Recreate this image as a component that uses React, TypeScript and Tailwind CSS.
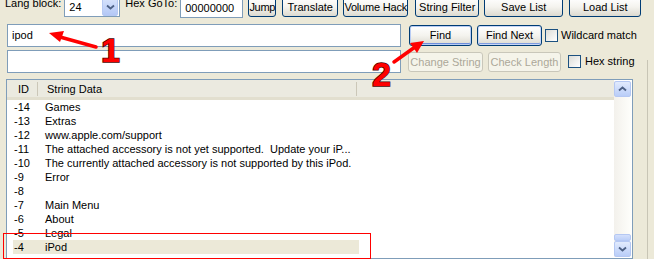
import React from 'react';

const rows: [string, string][] = [
  ['-14', 'Games'],
  ['-13', 'Extras'],
  ['-12', 'www.apple.com/support'],
  ['-11', 'The attached accessory is not yet supported.  Update your iP...'],
  ['-10', 'The currently attached accessory is not supported by this iPod.'],
  ['-9', 'Error'],
  ['-8', ''],
  ['-7', 'Main Menu'],
  ['-6', 'About'],
  ['-5', 'Legal'],
  ['-4', 'iPod'],
];

const btn =
  'shrink-0 flex items-center justify-center whitespace-nowrap rounded-[3px] border border-[#003C74] bg-linear-to-b from-white via-[#F4F3EE] to-[#DCDAD0] text-[11px] text-black leading-none';
const btnOff =
  'shrink-0 flex items-center justify-center whitespace-nowrap rounded-[3px] border border-[#C9C7BA] bg-[#F5F4EA] text-[11px] text-[#ACA899] leading-none';
const check = 'shrink-0 w-[13px] h-[13px] border border-[#1C5180] bg-linear-to-br from-[#DCDCD7] to-white';

export default function App() {
  return (
    <div className="relative w-[654px] h-[259px] overflow-hidden bg-[#ECE9D8] font-['Liberation_Sans',Arial,sans-serif] text-[11px] text-black">
      {/* top toolbar row */}
      <div className="flex items-start h-[20px] -mt-[3px]">
        <span className="ml-[5px] leading-[13px] whitespace-nowrap">Lang block:</span>
        <div className="ml-[3px] w-[56px] h-[20px] border border-[#7F9DB9] bg-white flex items-center">
          <span className="pl-[4px] flex-1 leading-none">24</span>
          <div className="w-[16px] h-[18px] mr-[1px] rounded-[2px] bg-linear-to-b from-[#D6E2FB] to-[#B4C8F6] border border-[#B6C9F2] flex items-center justify-center">
            <svg width="9" height="6" viewBox="0 0 9 6">
              <path d="M1 1.5 L4.5 4.5 L8 1.5" fill="none" stroke="#4D6185" strokeWidth="1.8" />
            </svg>
          </div>
        </div>
        <span className="ml-[5px] leading-[13px] whitespace-nowrap">Hex GoTo:</span>
        <div className="ml-[3px] mt-[1px] w-[63px] h-[20px] border border-[#7F9DB9] bg-white flex items-center pl-[4px]">00000000</div>
        <div className={`${btn} ml-[5px] w-[28px] h-[20px] tracking-[-0.3px]`}>Jump</div>
        <div className={`${btn} ml-[6px] w-[56px] h-[20px]`}>Translate</div>
        <div className={`${btn} ml-[5px] w-[65px] h-[20px] tracking-[-0.2px]`}>Volume Hack</div>
        <div className={`${btn} ml-[7px] w-[64px] h-[20px]`}>String Filter</div>
        <div className={`${btn} ml-[5px] w-[79px] h-[20px]`}>Save List</div>
        <div className={`${btn} ml-[6px] w-[72px] h-[20px]`}>Load List</div>
      </div>

      {/* search rows */}
      <div className="flex items-start mt-[7px]">
        <div className="ml-[7px] w-[394px] h-[23px] border border-[#7F9DB9] bg-white flex items-center pl-[4px]">ipod</div>
        <div className={`${btn} ml-[8px] mt-[1px] w-[63px] h-[21px] shadow-[inset_0_0_0_1px_#B8CCF4,inset_0_-2px_0_#6E8EDC]`}>Find</div>
        <div className={`${btn} ml-[5px] mt-[1px] w-[65px] h-[21px] shadow-[inset_0_0_0_1px_#C8D6F6,inset_0_-2px_0_#7F9CE0]`}>Find Next</div>
        <div className={`${check} ml-[3px] mt-[5px]`} />
        <span className="ml-[3px] mt-[5px] leading-[13px] whitespace-nowrap">Wildcard match</span>
      </div>
      <div className="flex items-start mt-[3px]">
        <div className="ml-[7px] w-[394px] h-[23px] border border-[#7F9DB9] bg-white" />
        <div className={`${btnOff} ml-[7px] mt-[2px] w-[75px] h-[20px]`}>Change String</div>
        <div className={`${btnOff} ml-[5px] mt-[2px] w-[73px] h-[20px]`}>Check Length</div>
        <div className={`${check} ml-[7px] mt-[5px]`} />
        <span className="ml-[4px] mt-[5px] leading-[13px] whitespace-nowrap">Hex string</span>
      </div>

      {/* list view */}
      <div className="ml-[6px] mt-[6px] w-[627px] h-[180px] border border-[#7F9DB9] bg-white flex">
        <div className="flex-1 flex flex-col">
          <div className="h-[20px] flex items-center bg-[#EBEAE0] border-b-[3px] border-[#E2DFCF]">
            <div className="w-[31px] pl-[11px] border-r border-[#CBC7B8] leading-[14px]">ID</div>
            <div className="w-[319px] pl-[9px] border-r border-[#CBC7B8] leading-[14px]">String Data</div>
          </div>
          <div className="flex flex-col">
            {rows.map(([id, text], i) => (
              <div
                key={id}
                className={`h-[14px] flex items-center leading-[14px] ${
                  i === rows.length - 1 ? 'ml-[6px] w-[346px] bg-[#ECE9D8]' : 'ml-[6px]'
                }`}
              >
                <span className="w-[32px] pl-[1px]">{id}</span>
                <span className="whitespace-pre">{text}</span>
              </div>
            ))}
          </div>
        </div>
        {/* scrollbar */}
        <div className="w-[17px] mt-[1px] mr-[1px] mb-[1px] flex flex-col bg-linear-to-r from-[#F3F1EC] to-[#FEFEFB]">
          <div className="h-[16px] rounded-[2px] border border-[#B5C8F3] bg-linear-to-b from-[#E2EBFD] to-[#B9CDF8] flex items-center justify-center">
            <svg width="9" height="6" viewBox="0 0 9 6">
              <path d="M1 4.5 L4.5 1.5 L8 4.5" fill="none" stroke="#4D6185" strokeWidth="1.8" />
            </svg>
          </div>
          <div className="flex-1" />
          <div className="h-[7px] rounded-[2px] border border-[#B5C8F3] bg-linear-to-b from-[#D4E0FC] to-[#BCCFF8]" />
          <div className="h-[16px] rounded-[2px] border border-[#B5C8F3] bg-linear-to-b from-[#E2EBFD] to-[#B9CDF8] flex items-center justify-center">
            <svg width="9" height="6" viewBox="0 0 9 6">
              <path d="M1 1.5 L4.5 4.5 L8 1.5" fill="none" stroke="#4D6185" strokeWidth="1.8" />
            </svg>
          </div>
        </div>
      </div>

      {/* group edge on the right */}
      <div className="absolute left-[647px] top-[60px] w-px h-[199px] bg-[#C8C5B5]" />

      {/* annotations */}
      <div className="absolute left-[3px] top-[233px] w-[368px] h-[26px] border-[1.5px] border-[#FF0000]" />
      <svg className="absolute left-0 top-0 pointer-events-none" width="654" height="259">
        <line x1="96" y1="47" x2="60" y2="37" stroke="#F00" strokeWidth="3.5" strokeLinecap="round" />
        <polygon points="49,33 64,31 60,42" fill="#F00" />
        <line x1="394" y1="62" x2="415" y2="47" stroke="#F00" strokeWidth="3.5" strokeLinecap="round" />
        <polygon points="424,41 417,53 410,43" fill="#F00" />
      </svg>
      <span className="absolute left-[101px] top-[33px] text-[34px] leading-none font-bold text-[#FF0000] [-webkit-text-stroke:1.5px_#4A0000] [paint-order:stroke_fill]">1</span>
      <span className="absolute left-[372px] top-[57px] text-[34px] leading-none font-bold text-[#FF0000] [-webkit-text-stroke:1.5px_#4A0000] [paint-order:stroke_fill]">2</span>
    </div>
  );
}
